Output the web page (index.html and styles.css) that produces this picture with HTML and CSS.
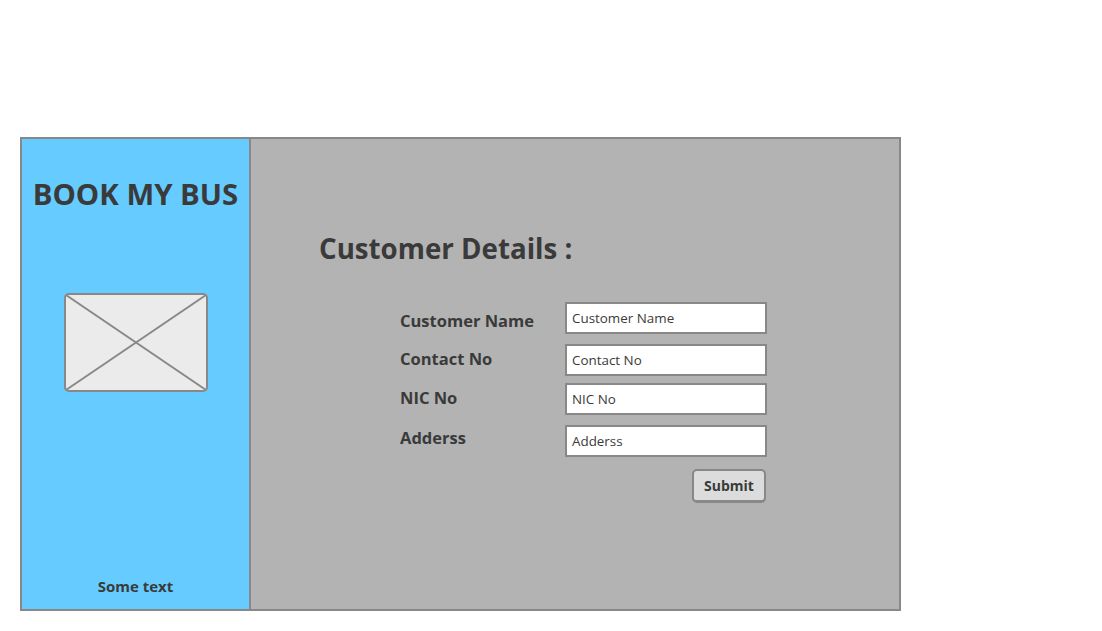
FILE: index.html
```html
<!DOCTYPE html>
<html>
<head>
<meta charset="utf-8">
<link rel="stylesheet" href="styles.css">
</head>
<body>
<div class="frame">
  <aside class="side">
    <h1 class="brand">BOOK MY BUS</h1>
    <div class="placeholder">
      <svg width="144" height="99" viewBox="0 0 144 99">
        <rect x="1" y="1" width="142" height="97" rx="4" fill="#ebebeb" stroke="#888" stroke-width="2"/>
        <line x1="2" y1="2" x2="142" y2="97" stroke="#888" stroke-width="2"/>
        <line x1="142" y1="2" x2="2" y2="97" stroke="#888" stroke-width="2"/>
      </svg>
    </div>
    <div class="side-foot">Some text</div>
  </aside>
  <main class="content">
    <h2 class="heading">Customer Details :</h2>
    <form class="form">
      <div class="row r1"><label class="lbl">Customer Name</label><div class="field">Customer Name</div></div>
      <div class="row r2"><label class="lbl">Contact No</label><div class="field">Contact No</div></div>
      <div class="row r3"><label class="lbl">NIC No</label><div class="field">NIC No</div></div>
      <div class="row r4"><label class="lbl">Adderss</label><div class="field">Adderss</div></div>
      <div class="actions"><button type="button" class="btn">Submit</button></div>
    </form>
  </main>
</div>
</body>
</html>
```
FILE: styles.css
```css
* { box-sizing: border-box; }
body {
  margin: 0;
  background: #fff;
  font-family: "Open Sans", "Liberation Sans", sans-serif;
  color: #3a3a3a;
}
.frame {
  margin: 137px 0 0 20px;
  width: 881px;
  height: 474px;
  border: 2px solid #888;
  display: flex;
}
.side {
  width: 229px;
  background: #66ccff;
  border-right: 2px solid #888;
  display: flex;
  flex-direction: column;
  align-items: center;
}
.brand {
  margin: 36px 0 0 0;
  font-size: 29.4px;
  font-weight: 700;
  line-height: 38px;
}
.placeholder {
  margin-top: 80px;
  display: flex;
}
.side-foot {
  margin-top: auto;
  margin-bottom: 13px;
  font-size: 15px;
  font-weight: 700;
}
.content {
  flex: 1;
  background: #b3b3b3;
  padding: 89px 0 0 68px;
}
.heading {
  margin: 0;
  font-size: 27.7px;
  font-weight: 700;
  line-height: 40px;
}
.form {
  margin: 34px 0 0 81px;
  width: 367px;
  display: flex;
  flex-direction: column;
}
.row {
  display: flex;
  align-items: center;
  height: 32px;
}
.r1 { margin-bottom: 10px; }
.r2 { margin-bottom: 7px; }
.r3 { margin-bottom: 10px; }
.r1 .lbl { padding-top: 4px; }
.r2 .lbl, .r3 .lbl { padding-bottom: 3px; }
.r4 .lbl { padding-bottom: 7px; }
.lbl {
  width: 165px;
  font-size: 16.5px;
  font-weight: 700;
}
.field {
  width: 202px;
  height: 32px;
  border: 2px solid #888;
  background: #fff;
  font-size: 13.4px;
  padding: 0 5px;
  display: flex;
  align-items: center;
}
.actions {
  display: flex;
  justify-content: flex-end;
  margin-top: 12px;
  padding-right: 1px;
}
.btn {
  width: 74px;
  height: 34px;
  border: 2px solid #888;
  border-bottom-width: 3px;
  border-radius: 5px;
  background: #dcdcdc;
  font-family: inherit;
  font-size: 14px;
  font-weight: 700;
  color: #3a3a3a;
  padding: 0;
}
```
